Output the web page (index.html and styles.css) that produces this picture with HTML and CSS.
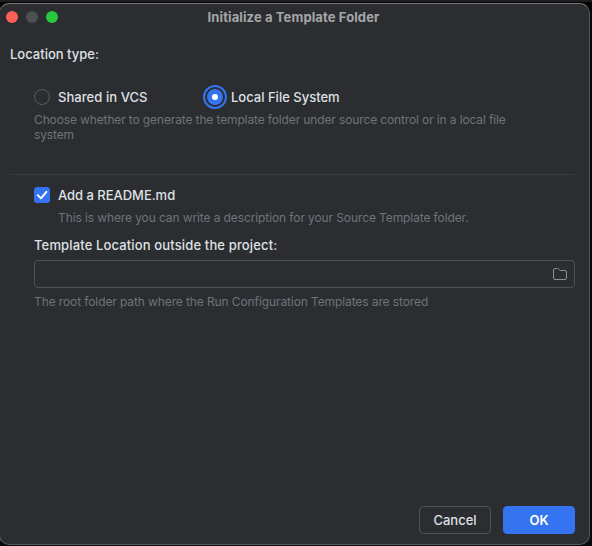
FILE: index.html
```html
<!DOCTYPE html>
<html lang="en">
<head>
<meta charset="utf-8">
<title>Initialize a Template Folder</title>
<link rel="stylesheet" href="styles.css">
</head>
<body>
<main class="dialog">
  <header class="titlebar">
    <div class="lights"><i class="light close"></i><i class="light minimize"></i><i class="light expand"></i></div>
    <h1 class="title">Initialize a Template Folder</h1>
  </header>
  <section class="content">
    <div class="group-label">Location type:</div>
    <div class="indent">
      <div class="radios">
        <label class="option vcs"><i class="radio"></i><span>Shared in VCS</span></label>
        <label class="option local"><i class="radio selected"></i><span>Local File System</span></label>
      </div>
      <p class="hint choose">Choose whether to generate the template folder under source control or in a local file<br>system</p>
    </div>
    <hr class="divider">
    <div class="indent">
      <label class="option readme">
        <svg class="checkbox" width="16" height="16" viewBox="0 0 16 16"><rect width="16" height="16" rx="3" fill="#3574f0"/><path d="M3.8 8.2 7 11.4 12.4 4.8" fill="none" stroke="#fff" stroke-width="1.9" stroke-linecap="round" stroke-linejoin="round"/></svg>
        <span>Add a README.md</span>
      </label>
      <p class="hint readme-hint">This is where you can write a description for your Source Template folder.</p>
      <div class="field-label">Template Location outside the project:</div>
      <div class="field">
        <svg width="16" height="16" viewBox="0 0 16 16"><path d="M1.5 4V12Q1.5 13.5 3 13.5H13Q14.5 13.5 14.5 12V6Q14.5 4.5 13 4.5H8.2L6.4 2.8Q6.1 2.5 5.7 2.5H3Q1.5 2.5 1.5 4Z" fill="none" stroke="#8c8e93"/></svg>
      </div>
      <p class="hint root-hint">The root folder path where the Run Configuration Templates are stored</p>
    </div>
  </section>
  <footer class="actions">
    <button class="button">Cancel</button>
    <button class="button primary">OK</button>
  </footer>
</main>
</body>
</html>
```
FILE: styles.css
```css
* { box-sizing: border-box; }
html { background: #08090a; }
body {
  margin: 0;
  height: 546px;
  padding-top: 3px;
  overflow: hidden;
  background: linear-gradient(#1c1e1e 0 2px, #030303 2px 12px, #08090a 12px);
  font: 500 13px/16px Inter, sans-serif;
  color: #dfe1e5;
}
.dialog {
  display: flex;
  flex-direction: column;
  width: 591px;
  height: 542px;
  margin-left: -1px;
  border: 1px solid #55575a;
  border-top-color: #77797a;
  border-radius: 10px;
  background: #2b2d30;
}
.titlebar {
  display: grid;
  grid-template-columns: 1fr auto 1fr;
  align-items: center;
  height: 26px;
  padding: 0 8px 0 6px;
}
.lights { display: flex; gap: 8px; }
.light { width: 12px; height: 12px; border-radius: 50%; }
.close { background: #ff5f57; }
.minimize { background: #4d4f51; }
.expand { background: #28c840; }
.title { margin: -1px 0 0; font-size: 13px; line-height: 16px; font-weight: 700; letter-spacing: .11px; color: #a5a6a8; }
.content { padding: 16px 14px 0 10px; }
.indent { padding-left: 24px; }
.radios { display: flex; height: 24px; margin-top: 23px; }
.option { display: flex; align-items: center; gap: 8px; }
.vcs { width: 173px; letter-spacing: .06px; }
.radio { width: 16px; height: 16px; border: 1px solid #5a5d63; border-radius: 50%; }
.selected {
  border: 5px solid #3574f0;
  background: #fff;
  box-shadow: 0 0 0 2px #2b2d30, 0 0 0 4px #3574f0;
}
.hint { margin: 0; font-size: 12px; line-height: 15px; font-weight: 400; letter-spacing: -.105px; color: #6f737a; white-space: nowrap; }
.choose { margin-top: 3px; letter-spacing: -.128px; }
.divider { height: 1px; margin: 32px 0 12px; border: 0; background: #393b40; }
.readme { height: 16px; letter-spacing: -.03px; }
.readme-hint { margin: 7px 0 0 24px; }
.field-label { margin-top: 12px; letter-spacing: .14px; }
.field {
  display: flex;
  align-items: center;
  justify-content: flex-end;
  height: 28px;
  margin-top: 7px;
  padding-right: 6px;
  border: 1px solid #4e5157;
  border-radius: 4px;
}
.root-hint { margin-top: 6px; }
.actions { display: flex; justify-content: flex-end; gap: 12px; margin-top: auto; padding: 0 14px 10px; }
.button {
  width: 72px;
  height: 28px;
  padding: 0;
  border: 1px solid #4e5157;
  border-radius: 4px;
  background: transparent;
  color: #dfe1e5;
  font: inherit;
}
.primary { border-color: #3574f0; background: #3574f0; color: #fff; font-weight: 600; }
```
